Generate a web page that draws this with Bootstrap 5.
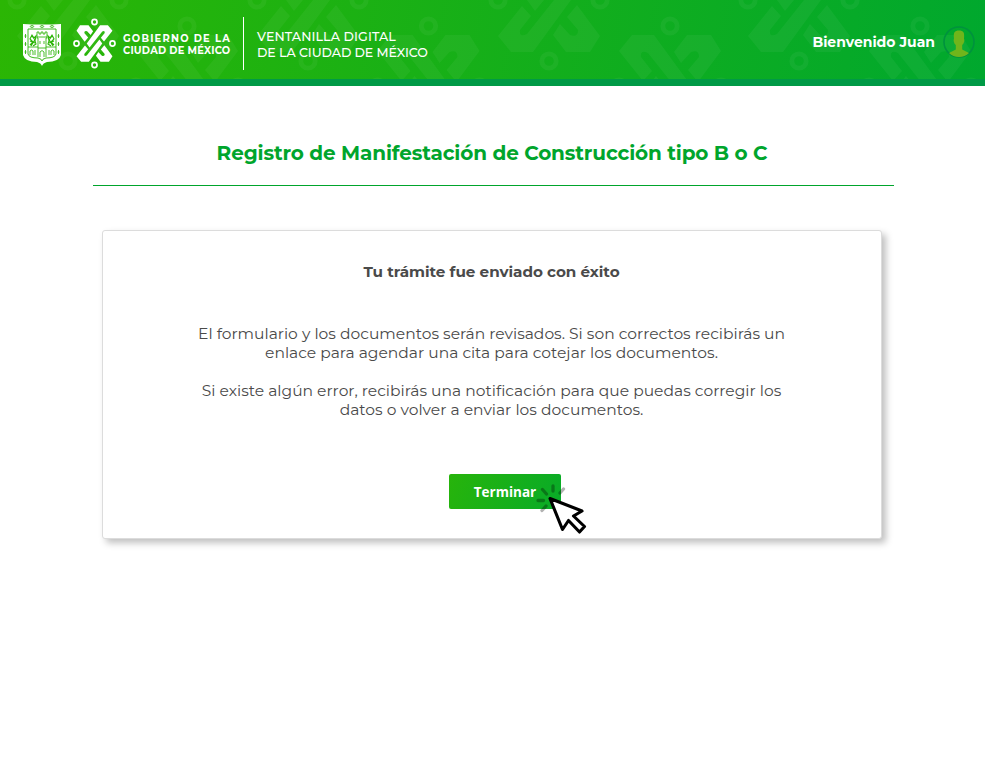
<!DOCTYPE html>
<html lang="es">
<head>
<meta charset="utf-8">
<meta name="viewport" content="width=device-width, initial-scale=1">
<title>Ventanilla Digital</title>
<link href="https://cdn.jsdelivr.net/npm/bootstrap@5.3.0/dist/css/bootstrap.min.css" rel="stylesheet">
<style>
body{font-family:Montserrat,Inter,sans-serif;color:#4a4a4a;background:#fff}
.topbar{height:86px;background:linear-gradient(100deg,#2bb604 0%,#00a82e 100%);border-bottom:7px solid #009a46;padding:0 10px 0 23px}
.pattern{left:0;top:0;width:985px;height:79px}
.shield{margin-top:24px}
.brand{margin:18px 0 0 12px}
.gov{width:108px;margin:32px 0 0 7px;font-weight:700;font-size:9.9px;line-height:12px;white-space:nowrap}
.gov .l1{letter-spacing:1.22px}.gov .l2{letter-spacing:.23px}
.sep{width:1px;height:53px;background:#fff;margin:17px 0 0 12px}
.vent{margin:29px 0 0 13px;font-size:12.6px;line-height:16px;white-space:nowrap;font-weight:500}
.vent .l1{letter-spacing:.11px}.vent .l2{letter-spacing:-.07px}
.user{margin-top:24px}
.hello{font-size:14px;font-weight:700;white-space:nowrap;padding-top:3px}
.shell{width:801px;margin-left:92.500px}
.title{height:100px;padding:55px 2px 0 0;border-bottom:1px solid #00a52c;color:#00a52c;font-size:20px;line-height:25px;font-weight:700;letter-spacing:-.13px;white-space:nowrap}
.panel{width:780px;height:309px;margin:44px 0 50px 9.500px;padding-right:1px;border:1px solid #dcdcdc;border-radius:3px;box-shadow:4px 4px 7px rgba(0,0,0,.25)}
.ok{font-size:15.2px;line-height:20px;font-weight:700;margin-top:31px;letter-spacing:-.04px}
.msg{font-size:15.5px;line-height:19px;white-space:nowrap;letter-spacing:.01px}
.msg.first{margin-top:42px}.msg.second{margin-top:19px}
.finish{width:112px;height:35px;margin:55px 0 0 26px;border:0;border-radius:2px;padding:0 0 0 1px;background:linear-gradient(110deg,#27b40b,#08ab28);font:700 13.5px/36px "Open Sans",sans-serif;color:#fff}
.finish:hover{color:#fff}
.pointer{left:84px;top:8px}
</style>
</head>
<body>
<svg width="0" height="0" class="position-absolute">
<defs>
<g id="half">
<path d="M-51 36L-27 6L-18 16L-29 30Q-30 38-22 34L5 0L14-11L22 0L-16 52H-38Z"/>
<path d="M4 35L17 52H41L51 36L28 5L18 17L29 30Q29 38 21 35L11 24Z"/>
<g fill="none" stroke="currentColor" stroke-width="4.800"><circle cy="61" r="7.200"/><circle cx="-51" r="7.200"/></g>
</g>
<g id="knot"><use href="#half"/><use href="#half" transform="rotate(180)"/></g>
<g id="knotflip" transform="scale(1 -1)"><use href="#knot"/></g>
</defs>
</svg>
<header class="topbar position-relative text-white">
<svg class="pattern position-absolute" viewBox="0 0 985 79">
<g fill="#fff" color="#fff" opacity=".043">
<use href="#knot" x="68"/><use href="#knot" x="308"/><use href="#knot" x="549"/><use href="#knot" x="799"/>
<use href="#knotflip" x="187" y="87"/><use href="#knotflip" x="428.500" y="87"/><use href="#knotflip" x="670" y="87"/><use href="#knotflip" x="920" y="87"/>
</g></svg>
<div class="d-flex align-items-start position-relative">
<svg class="shield flex-shrink-0" width="38" height="42" viewBox="0 0 38 42">
<path fill="#fff" d="M0 0Q19 1 38 0V31Q36 38 24 38Q20 39 19 42Q18 39 14 38Q2 38 0 31Z"/>
<path fill="none" stroke="#2bb407" stroke-width=".9" d="M5 5H33V30Q32 34 23 34Q19 35 19 37Q19 35 15 34Q6 34 5 30Z"/>
<g fill="none" stroke="#2bb407" stroke-width=".85"><ellipse cx="9" cy="2.500" rx="1.700" ry=".9"/><ellipse cx="19" cy="2.500" rx="1.700" ry=".9"/><ellipse cx="29" cy="2.500" rx="1.700" ry=".9"/><path d="M2.500 10v4M2.500 18v4M2.500 26v4M35.500 10v4M35.500 18v4M35.500 26v4M1.500 12h2M1.500 20h2M1.500 28h2M34.500 12h2M34.500 20h2M34.500 28h2"/>
<path d="M15 33V14h-1V8h2v2h2V8h2v2h2V8h2v6h-1v19M14 13h10M17 17v3M21 17v3M5 23h10M23 23h10M15 24h8M17 33v-5q2-3 4 0v5M7 31v-4q1.500-2 3 0v4M12 31v-5M26 31v-5M28 31v-4q1.500-2 3 0v4"/><path d="M7 21l3-3-3-3 2-4 2 3 2-2-1 5 1 3-3 2M31 21l-3-3 3-3-2-4-2 3-2-2 1 5-1 3 3 2M8 22l5-8M30 22l-5-8M7 17l5 2M31 17l-5 2M9 12l3 4M29 12l-3 4" stroke-width="1.100"/></g>
</svg>
<svg class="brand flex-shrink-0" width="43" height="51" viewBox="-61 -72 122 144"><use href="#knot" fill="#fff" color="#fff"/></svg>
<div class="gov"><span class="d-block l1">GOBIERNO DE LA</span><span class="d-block l2">CIUDAD DE MÉXICO</span></div>
<div class="sep"></div>
<div class="vent"><span class="l1">VENTANILLA DIGITAL</span><br><span class="l2">DE LA CIUDAD DE MÉXICO</span></div>
<div class="user ms-auto d-flex align-items-center"><span class="hello me-2">Bienvenido Juan</span>
<svg width="32" height="34" viewBox="0 0 32 34"><circle cx="16" cy="18" r="15" fill="none" stroke="#00923e" stroke-width="1.600"/><path fill="#70b51b" d="M16 6.500C11.500 6.500 10.300 8.500 11 14.500C10 17 11.500 20 12.800 21V25.500L6 29Q10 33 16 33Q22 33 26 29L19.200 25.500V21C20.500 20 22 17 21 14.500C21.700 8.500 20.500 6.500 16 6.500Z"/></svg></div>
</div>
</header>
<main class="shell">
<h1 class="title text-center mb-0">Registro de Manifestación de Construcción tipo B o C</h1>
<section class="panel d-flex flex-column align-items-center text-center bg-white">
<h2 class="ok mb-0">Tu trámite fue enviado con éxito</h2>
<p class="msg first mb-0">El formulario y los documentos serán revisados. Si son correctos recibirás un<br>enlace para agendar una cita para cotejar los documentos.</p>
<p class="msg second mb-0">Si existe algún error, recibirás una notificación para que puedas corregir los<br>datos o volver a enviar los documentos.</p>
<button type="button" class="finish btn position-relative">Terminar
<svg class="pointer position-absolute" width="56" height="56" viewBox="0 0 56 56"><g stroke="#000" stroke-opacity=".3" stroke-width="3.300" stroke-linecap="round"><path d="M20 4v5M9.500 7.500l4 4.500M5 18.500h5.500M9 28.500l4-4.500M27 11l3.500-4"/></g><path d="M17 16.500L29.500 47.500L35.500 38.500L46.500 50L51.500 44.500L40.500 34L49 29Z" fill="#fff" stroke="#000" stroke-width="3.100" stroke-linejoin="round"/></svg>
</button>
</section>
</main>
</body>
</html>
